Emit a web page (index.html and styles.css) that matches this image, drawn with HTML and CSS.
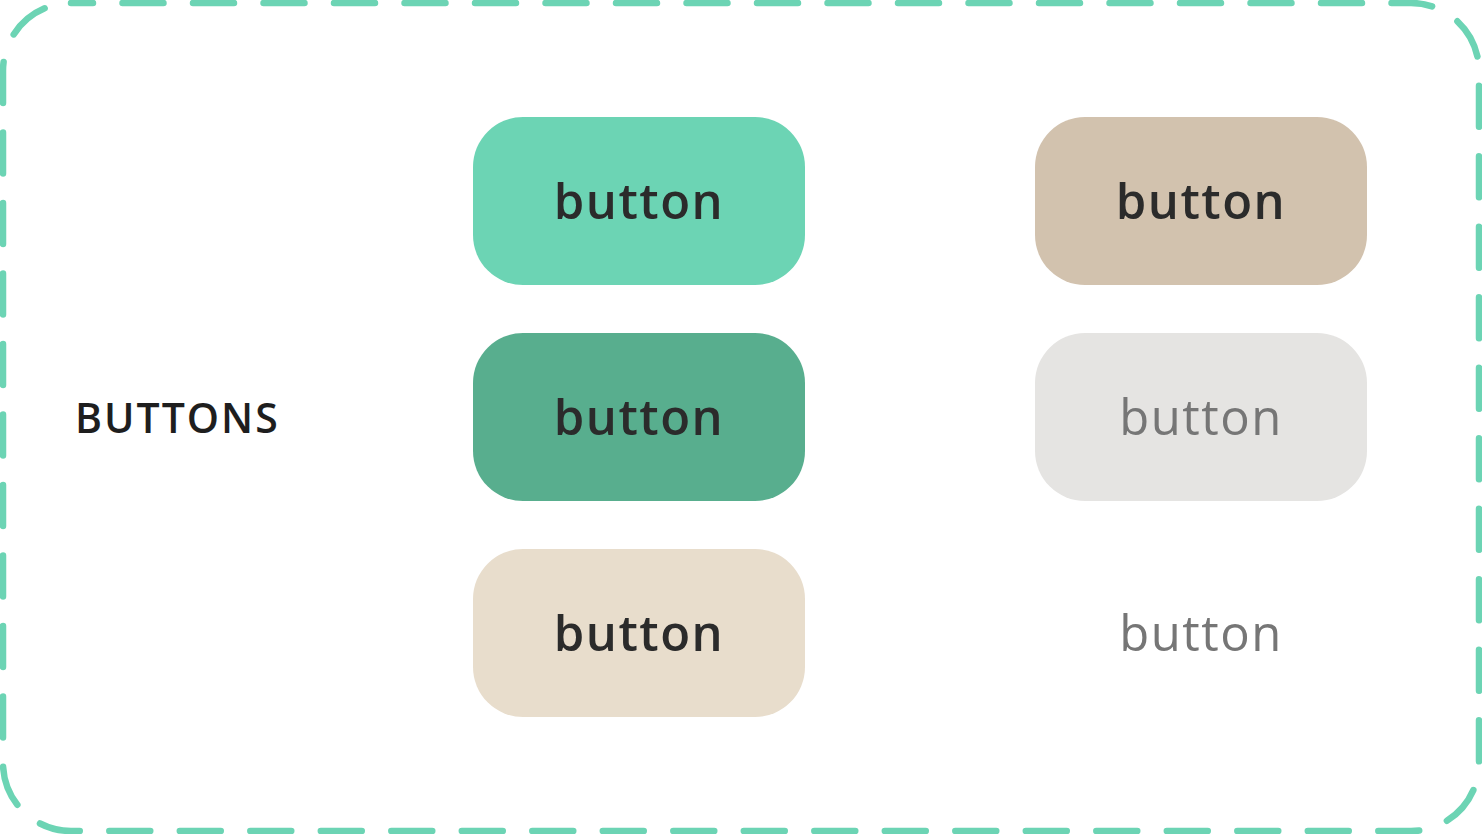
FILE: index.html
```html
<!DOCTYPE html>
<html lang="en">
<head>
<meta charset="utf-8">
<title>Buttons</title>
<link rel="stylesheet" href="styles.css">
</head>
<body>
<main class="sheet">
  <svg class="sheet-frame" width="1482" height="834" viewBox="0 0 1482 834" aria-hidden="true">
    <rect x="3" y="3" width="1476" height="828" rx="68" ry="68" fill="none" stroke="#6cd4b4" stroke-width="6.5" stroke-linecap="round" stroke-dasharray="41 29.5" stroke-dashoffset="19"/>
  </svg>
  <h2 class="sheet-title">BUTTONS</h2>
  <div class="button-grid">
    <button class="btn btn-primary">button</button>
    <button class="btn btn-secondary">button</button>
    <button class="btn btn-primary-active">button</button>
    <button class="btn btn-disabled">button</button>
    <button class="btn btn-soft">button</button>
    <button class="btn btn-text">button</button>
  </div>
</main>
</body>
</html>
```

FILE: styles.css
```css
* {
  box-sizing: border-box;
}

html, body {
  margin: 0;
  padding: 0;
  background: #ffffff;
}

.sheet {
  position: relative;
  width: 1482px;
  height: 834px;
  display: flex;
  align-items: center;
  padding-left: 75px;
  font-family: "Open Sans", "Noto Sans", sans-serif;
}

/* dashed outline around the whole sheet */
.sheet-frame {
  position: absolute;
  left: 0;
  top: 0;
  pointer-events: none;
}

.sheet-title {
  width: 398px;
  margin: 0;
  font-size: 41px;
  font-weight: 600;
  letter-spacing: 2px;
  color: #1e1e1e;
  line-height: 1;
}

.button-grid {
  display: grid;
  grid-template-columns: 332px 332px;
  grid-auto-rows: 168px;
  column-gap: 230px;
  row-gap: 48px;
}

.btn {
  border: none;
  border-radius: 50px;
  font-family: inherit;
  font-size: 49px;
  font-weight: 600;
  letter-spacing: 1.5px;
  color: #2b2b2b;
  display: flex;
  align-items: center;
  justify-content: center;
  padding: 0 0 2px;
  cursor: pointer;
}

.btn-primary {
  background: #6cd4b4;
}

.btn-secondary {
  background: #d2c2ae;
}

.btn-primary-active {
  background: #58ae8e;
}

.btn-disabled {
  background: #e5e4e2;
  color: #767676;
  font-weight: 400;
}

.btn-soft {
  background: #e8ddcc;
}

.btn-text {
  background: transparent;
  color: #767676;
  font-weight: 400;
}
```
